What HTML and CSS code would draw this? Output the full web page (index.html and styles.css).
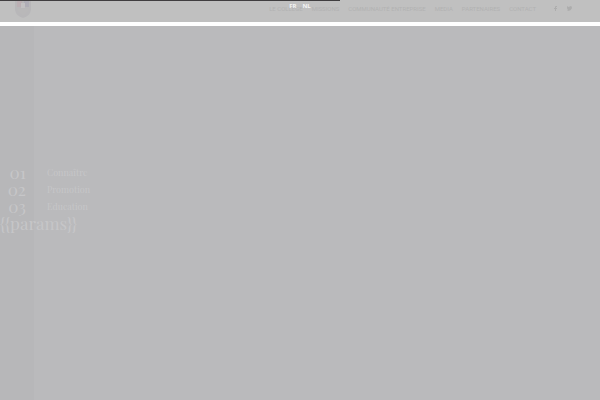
FILE: index.html
```
<!DOCTYPE html>
<html lang="fr">
<head>
<meta charset="utf-8">
<title>Collège</title>
<link rel="stylesheet" href="styles.css">
</head>
<body>
<div class="progress"></div>
<header class="header">
  <a class="logo" href="#" aria-label="Accueil">
    <svg width="16" height="18" viewBox="0 0 16 18"><path d="M0 0H16V10Q15 16 8 18Q1 16 0 10Z" fill="#b8b7b9"/><path d="M2 1H7V7H2Z" fill="#bbafb3"/><path d="M9 1H14V7H9Z" fill="#afadb6"/><path d="M3 9H13V11Q11 14 8 15Q5 14 3 11Z" fill="#b9b8b9"/><path d="M6 3H10V8H6Z" fill="#c2c0c2"/></svg>
  </a>
  <nav class="languages"><a href="#">FR</a><a href="#">NL</a></nav>
  <nav class="menu">
    <a href="#">LE COLLÈGE</a>
    <a href="#">MISSIONS</a>
    <a href="#">COMMUNAUTÉ ENTREPRISE</a>
    <a href="#">MEDIA</a>
    <a href="#">PARTENAIRES</a>
    <a href="#">CONTACT</a>
  </nav>
  <div class="social">
    <a href="#" aria-label="Facebook"><svg width="4" height="5" viewBox="0 0 4 5"><path d="M1 5V3H0V2H1V1Q1 0 2 0H3V1H2V2H3V3H2V5Z"/></svg></a>
    <a href="#" aria-label="Twitter"><svg width="5" height="5" viewBox="0 0 5 5"><path d="M0 0Q1 1 2 1Q3 0 4 0L5 1Q5 5 0 5L1 4Q0 3 0 2Z"/></svg></a>
  </div>
</header>
<main class="main">
  <ol class="chapters">
    <li><span class="number">01</span><a href="#">Connaître</a></li>
    <li><span class="number">02</span><a href="#">Promotion</a></li>
    <li><span class="number">03</span><a href="#">Education</a></li>
  </ol>
  <p class="params">{{params}}</p>
</main>
</body>
</html>
```
FILE: styles.css
```
* { box-sizing: border-box; }
body {
  margin: 0;
  min-height: 100vh;
  display: flex;
  flex-direction: column;
  background: #b9b9bb;
  font-family: Roboto, sans-serif;
}
a { color: inherit; text-decoration: none; }
.progress {
  position: absolute;
  z-index: 1;
  top: 0;
  left: 0;
  width: 340px;
  height: 1px;
  background: #403e40;
}
.header {
  position: relative;
  display: flex;
  height: 26px;
  padding: 0 28px 0 15px;
  background: #c0c0c0;
  border-bottom: 4px solid #fff;
}
.logo svg { display: block; }
.languages {
  position: absolute;
  z-index: 1;
  top: 2px;
  left: 0;
  right: 0;
  display: flex;
  justify-content: center;
  gap: 6px;
  font-family: "Open Sans", sans-serif;
  font-size: 6px;
  line-height: 9px;
  font-weight: 700;
  color: #f4f4f4;
}
.menu {
  display: flex;
  gap: 9px;
  margin-left: auto;
  padding-top: 4px;
  font-size: 6px;
  line-height: 10px;
  font-weight: 400;
  white-space: nowrap;
  color: #b2b2b2;
}
.social {
  display: flex;
  gap: 9px;
  padding: 6px 0 0 18px;
  fill: #adadad;
}
.social svg { display: block; }
.main {
  flex: 1;
  padding-top: 138px;
  background: linear-gradient(90deg, #b7b7b9 34px, #bababc 34px);
  font-family: "Playfair Display", "Liberation Serif", serif;
  color: #c6c6c8;
}
.chapters {
  margin: 0;
  padding: 0;
  list-style: none;
}
.chapters li {
  display: grid;
  grid-template-columns: 26px 1fr;
  column-gap: 21px;
  align-items: center;
  height: 17px;
  font-size: 9px;
  line-height: 17px;
}
.number {
  text-align: right;
  font-size: 17px;
}
.params {
  margin: 0;
  font-size: 17px;
  line-height: 17px;
}
```
